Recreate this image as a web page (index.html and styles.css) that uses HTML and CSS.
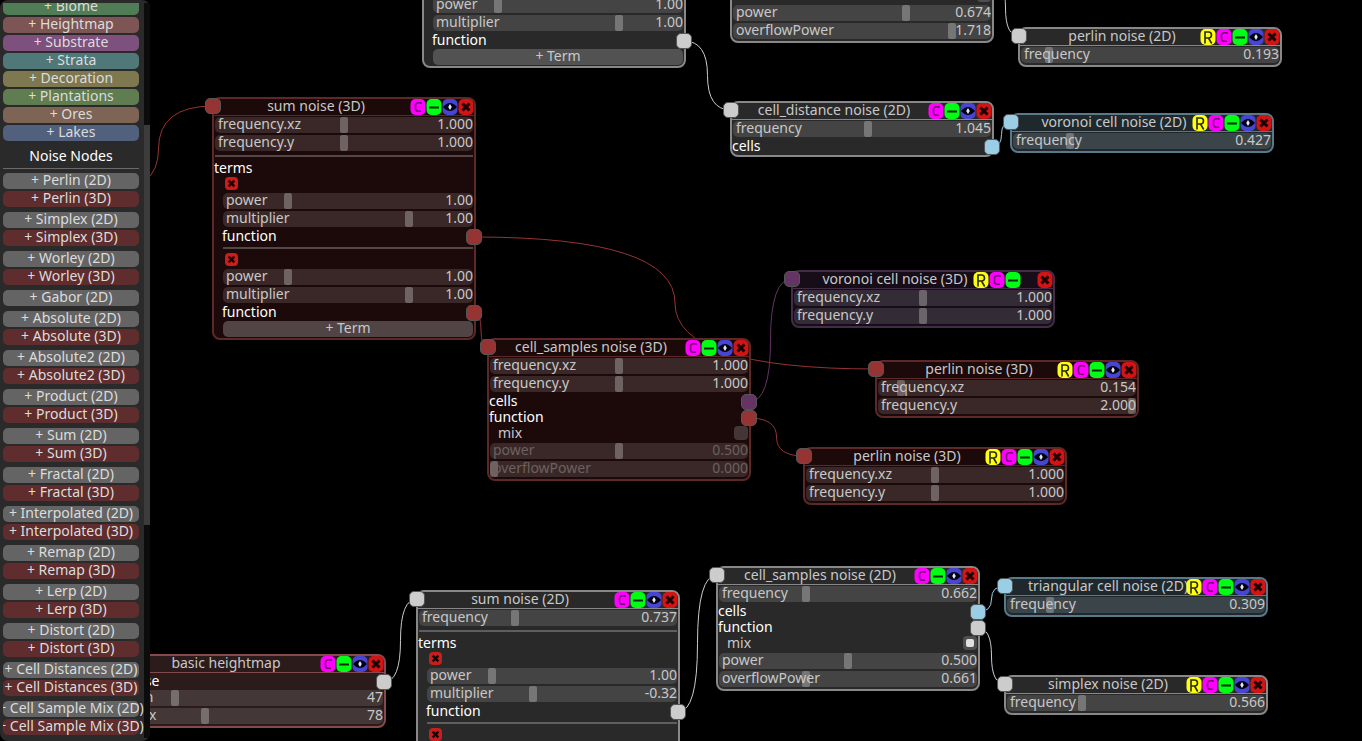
FILE: index.html
```html
<!DOCTYPE html>
<html lang="en">
<head>
  <meta charset="UTF-8" />
  <meta name="viewport" content="width=device-width, initial-scale=1.0" />
  <title>Node Editor</title>
  <link rel="stylesheet" href="styles.css">
</head>
<body>

  <main class="canvas" id="canvas">
    <svg class="links" id="links" aria-hidden="true"></svg>
  </main>

  <aside class="sidebar">
    <div class="palette" id="palette">
      <button class="add biome">+ Biome</button>
      <button class="add heightmap">+ Heightmap</button>
      <button class="add substrate">+ Substrate</button>
      <button class="add strata">+ Strata</button>
      <button class="add decoration">+ Decoration</button>
      <button class="add plantations">+ Plantations</button>
      <button class="add ores">+ Ores</button>
      <button class="add lakes">+ Lakes</button>
      <h2>Noise Nodes</h2>
    </div>
    <div class="scrollbar"><div class="thumb"></div></div>
  </aside>

  <script src="script.js"></script>
</body>
</html>
```
FILE: styles.css
```css
* {
  box-sizing: border-box;
}
body {
  margin: 0;
  height: 100vh;
  overflow: hidden;
  background: #000;
  color: #c8c8c8;
  font-family: "Noto Sans", sans-serif;
  font-size: 14px;
  line-height: 14px;
}
button {
  border: 0;
  padding: 0;
  font: inherit;
  color: inherit;
  cursor: pointer;
}

/* sidebar */
.sidebar {
  position: relative;
  z-index: 1;
  display: flex;
  width: 150px;
  height: 100vh;
  padding: 3px 0 3px 3px;
  background: #2a2a2a;
  border-radius: 8px;
  overflow: hidden;
}
.palette {
  display: flex;
  flex-direction: column;
  gap: 2px;
  flex: 1;
  padding: 0 5px 8px 0;
  overflow: hidden;
}
.add {
  display: flex;
  flex: none;
  justify-content: center;
  height: 16px;
  border-radius: 5px;
  background: #646464;
  color: #dcdcdc;
  white-space: nowrap;
}
.palette h2 {
  flex: none;
  margin: 5px 0 2px;
  padding-bottom: 4px;
  border-bottom: 1px solid #6a6a6a;
  color: #fff;
  font-size: 14px;
  font-weight: normal;
  line-height: 16px;
  text-align: center;
}
.group {
  display: flex;
  flex: none;
  flex-direction: column;
  gap: 2px;
  padding-bottom: 3px;
}
.biome { background: #507d55; }
.heightmap { background: #7d5555; }
.substrate { background: #7d507d; }
.strata { background: #507878; }
.decoration { background: #7d7850; }
.plantations { background: #5f7d50; }
.ores { background: #7d6455; }
.lakes { background: #50607d; }
.three-d { background: #5f2d2d; }

.scrollbar {
  width: 6px;
  padding-top: 122px;
  background: #0c0c0c;
}
.thumb {
  height: 400px;
  background: #3c3c3c;
}

/* canvas */
.canvas {
  position: absolute;
  inset: 0;
  z-index: 0;
  overflow: hidden;
}
.links {
  position: absolute;
  width: 100%;
  height: 100%;
  fill: none;
}

/* nodes */
.node {
  --line: #888;
  --bg: #292929;
  --track: #444;
  --term: #525252;
  position: absolute;
  width: 264px;
  padding-bottom: 1px;
  border: 2px solid var(--line);
  border-radius: 8px;
  background: var(--bg);
}
.node.red {
  --line: #5c2828;
  --bg: #1c0a0a;
  --track: #3a2828;
  --term: #504444;
}
.node.blue {
  --line: #58798a;
  --bg: #1e282d;
  --track: #3b4549;
}
.node.purple {
  --line: #442c48;
  --bg: #160d18;
  --track: #332b35;
}
.node.brown {
  --line: #84494c;
  --bg: #2c1b1b;
  --track: #443737;
}
.head {
  display: flex;
  height: 17px;
  border-bottom: 1px solid var(--line);
}
.title {
  flex: 1;
  margin: 0;
  padding-left: 8px;
  font-size: 14px;
  font-weight: normal;
  line-height: 14px;
  text-align: center;
  white-space: nowrap;
}
.tools {
  display: flex;
  flex: none;
  justify-content: flex-end;
  width: 64px;
}
.tool {
  flex: none;
  width: 16px;
  height: 16px;
  background: none;
}
.tool svg {
  display: block;
}
.row {
  display: flex;
  height: 16px;
  line-height: 16px;
  position: relative;
}
.label {
  color: #fff;
}
.slider {
  display: grid;
  grid-template-columns: 1fr auto;
  height: 18px;
  padding: 1px;
  position: relative;
}
.slider input {
  grid-area: 1 / 1 / 2 / 3;
  appearance: none;
  width: 100%;
  height: 16px;
  margin: 0;
  border-radius: 5px;
  background: var(--track);
}
.slider input::-webkit-slider-thumb {
  appearance: none;
  width: 8px;
  height: 16px;
  border-radius: 2px;
  background: rgba(255, 255, 255, 0.27);
}
.slider label,
.slider output {
  grid-row: 1;
  z-index: 1;
  pointer-events: none;
}
.slider label {
  grid-column: 1;
  padding-left: 3px;
}
.slider output {
  grid-column: 2;
}
.slider.off label,
.slider.off output {
  color: #6c6060;
}
.check {
  justify-content: space-between;
  height: 17px;
  padding: 0 1px 0 9px;
}
.check input {
  appearance: none;
  display: grid;
  place-items: center;
  width: 14px;
  height: 14px;
  margin: 1px 0;
  border-radius: 4px;
  background: rgba(255, 255, 255, 0.18);
}
.check input:checked::before {
  content: "";
  width: 8px;
  height: 8px;
  border-radius: 2px;
  background: #e0e0e0;
}
.rule {
  height: 8px;
  margin: 0 1px;
  padding: 3px 0;
  border: 0;
  background: rgba(255, 255, 255, 0.25) content-box;
}
.term {
  padding-left: 8px;
}
.remove {
  display: block;
  height: 16px;
  padding: 1px 0 2px 3px;
  background: none;
}
.remove svg {
  display: block;
}
.add-term {
  display: block;
  width: calc(100% - 10px);
  height: 16px;
  margin: 1px 1px 0 9px;
  padding-bottom: 2px;
  border-radius: 5px;
  background: var(--term);
}
.port {
  position: absolute;
  z-index: 2;
  width: 16px;
  height: 16px;
  border: 1px solid #555;
  border-radius: 5px;
  background: #ccc;
}
.port.in {
  left: -9px;
  top: -1px;
}
.port.out {
  right: -8px;
  top: 1px;
}
.port.red { background: #963434; }
.port.blue { background: #9acde6; }
.port.purple { background: #643464; }
```
FILE: script.js
```js
const noises = ['Perlin', 'Simplex', 'Worley', 'Gabor', 'Absolute', 'Absolute2', 'Product', 'Sum',
  'Fractal', 'Interpolated', 'Remap', 'Lerp', 'Distort', 'Cell Distances', 'Cell Sample Mix'];

const palette = document.getElementById('palette');
palette.innerHTML += noises.map(name => `
  <div class="group">
    <button class="add">+ ${name} (2D)</button>
    ${name === 'Gabor' ? '' : `<button class="add three-d">+ ${name} (3D)</button>`}
  </div>`).join('');
palette.scrollTop = 4;

const cross = '<path d="M4.5 4.5l7 7M11.5 4.5l-7 7" stroke="#1a0000" stroke-width="3"/>';
const icons = {
  R: ['random', '#ffff14', '<path d="M5 14.5V3h3.5a3 3 0 0 1 0 6H5M8.5 9l3.2 5.5" fill="none" stroke="#2a2a00" stroke-width="1.6"/>'],
  C: ['color', '#ff00ff', '<path d="M11 5V3.8H8Q5.5 3.8 5.5 6.5v3q0 2.8 2.5 2.8h3" fill="none" stroke="#780078" stroke-width="1.6"/>'],
  M: ['minimize', '#00ff14', '<path d="M3 8.5h10" stroke="#002800" stroke-width="2"/>'],
  E: ['preview', '#4646d2', '<path d="M1 8Q8 0 15 8Q8 16 1 8z" fill="#000014"/><path d="M8 5l1.8 3-1.8 3-1.8-3z" fill="#e4e4ee"/>'],
  X: ['remove', '#d21414', cross]
};

function tool(key) {
  if (key === ' ') return '<span class="tool"></span>';
  const [name, color, shape] = icons[key];
  return `<button class="tool" aria-label="${name}"><svg width="16" height="16" viewBox="0 0 16 16">
    <rect x=".5" width="15" height="16" rx="5" fill="${color}"/>${shape}</svg></button>`;
}

let count = 0;
function slider(name, value, min, max, off) {
  const id = 'field' + count++;
  return `<div class="slider${off ? ' off' : ''}">
    <input type="range" id="${id}" min="${min}" max="${max}" step="any" value="${value}"${off ? ' disabled' : ''}>
    <label for="${id}">${name}</label><output for="${id}">${value}</output></div>`;
}
const label = (name, color) =>
  `<div class="row"><span class="label">${name}</span><i class="port out ${color}"></i></div>`;
const freq = value => slider('frequency', value, 0, 2);
const freq3 = (xz, y) => slider('frequency.xz', xz, 0, 2) + slider('frequency.y', y, 0, 2);

function mix(on, power, overflow) {
  const id = 'field' + count++;
  return `<div class="row check"><label for="${id}">mix</label><input type="checkbox" id="${id}"${on ? ' checked' : ''}></div>`
    + slider('power', power, 0, 1, !on) + slider('overflowPower', overflow, 0, 2, !on);
}
function terms(list, color) {
  return '<hr class="rule"><div class="row"><span class="label">terms</span></div>' + list.map(multiplier => `<div class="term">
      <button class="remove" aria-label="remove term"><svg width="13" height="13" viewBox="0 0 16 16">
        <rect width="16" height="16" rx="5" fill="#c81e1e"/>${cross}</svg></button>
      ${slider('power', '1.00', 0, 4)}${slider('multiplier', multiplier, -2, 2)}${label('function', color)}
    </div>`).join('<div class="term"><hr class="rule"></div>') + '<button class="add-term">+ Term</button>';
}

// id, x, y, color, title, tools, body
const nodes = [
  ['sumTop', 422, -157, 'gray', 'sum noise (2D)', 'CMEX', freq('1.000') + terms(['1.00', '1.00'], 'gray')],
  ['samplesTop', 730, -82, 'gray', 'cell_samples noise (2D)', 'CMEX',
    freq('1.000') + label('cells', 'blue') + label('function', 'gray') + mix(true, '0.674', '1.718')],
  ['perlinTop', 1018, 27, 'gray', 'perlin noise (2D)', 'RCMEX', freq('0.193')],
  ['distance', 730, 101, 'gray', 'cell_distance noise (2D)', 'CMEX', freq('1.045') + label('cells', 'blue')],
  ['voronoi', 1010, 113, 'blue', 'voronoi cell noise (2D)', 'RCMEX', freq('0.427')],
  ['sum3', 212, 97, 'red', 'sum noise (3D)', 'CMEX', freq3('1.000', '1.000') + terms(['1.00', '1.00'], 'red')],
  ['voronoi3', 791, 270, 'purple', 'voronoi cell noise (3D)', 'RCM X', freq3('1.000', '1.000')],
  ['samples3', 487, 338, 'red', 'cell_samples noise (3D)', 'CMEX',
    freq3('1.000', '1.000') + label('cells', 'purple') + label('function', 'red') + mix(false, '0.500', '0.000')],
  ['perlinA', 875, 360, 'red', 'perlin noise (3D)', 'RCMEX', freq3('0.154', '2.000')],
  ['perlinB', 803, 447, 'red', 'perlin noise (3D)', 'RCMEX', freq3('1.000', '1.000')],
  ['height', 122, 654, 'brown', 'basic heightmap', 'CMEX',
    label('noise', 'gray') + slider('min', 47, 0, 255) + slider('max', 78, 0, 255)],
  ['sum2', 416, 590, 'gray', 'sum noise (2D)', 'CMEX', freq('0.737') + terms(['-0.32', '1.00'], 'gray')],
  ['samples2', 716, 566, 'gray', 'cell_samples noise (2D)', 'CMEX',
    freq('0.662') + label('cells', 'blue') + label('function', 'gray') + mix(true, '0.500', '0.661')],
  ['triangular', 1004, 577, 'blue', 'triangular cell noise (2D)', 'RCMEX', freq('0.309')],
  ['simplex', 1004, 675, 'gray', 'simplex noise (2D)', 'RCMEX', freq('0.566')]
];

const canvas = document.getElementById('canvas');
for (const [id, x, y, color, title, tools, body] of nodes) {
  const node = document.createElement('section');
  node.className = 'node ' + color;
  node.id = id;
  node.style.left = x + 'px';
  node.style.top = y + 'px';
  node.innerHTML = `${id === 'height' ? '' : `<i class="port in ${color}"></i>`}
    <header class="head"><h3 class="title">${title}</h3><div class="tools">${[...tools].map(tool).join('')}</div></header>${body}`;
  canvas.append(node);
}

// source node, index of its output, target node, stroke
const links = [
  ['sumTop', 1, 'distance', '#ccc'],
  ['samplesTop', 1, 'perlinTop', '#ccc'],
  ['distance', 0, 'voronoi', '#9acde6'],
  ['sum3', 0, 'perlinA', '#963434'],
  ['sum3', 1, 'samples3', '#963434'],
  ['samples3', 0, 'voronoi3', '#643464'],
  ['samples3', 1, 'perlinB', '#963434'],
  ['height', 0, 'sum2', '#ccc'],
  ['sum2', 0, 'samples2', '#ccc'],
  ['samples2', 0, 'triangular', '#9acde6'],
  ['samples2', 1, 'simplex', '#ccc']
];
const center = el => {
  const r = el.getBoundingClientRect();
  return [r.left + r.width / 2, r.top + r.height / 2];
};
// two bends that meet halfway
function curve([x1, y1], [x2, y2], color) {
  const mx = (x1 + x2) / 2;
  const my = (y1 + y2) / 2;
  return `<path d="M${x1} ${y1}Q${mx} ${y1} ${mx} ${my}Q${mx} ${y2} ${x2} ${y2}" stroke="${color}"/>`;
}
const input = id => center(document.querySelector(`#${id} > .port.in`));
document.getElementById('links').innerHTML = curve([104, 192], input('sum3'), '#963434')
  + links.map(([from, out, to, color]) =>
    curve(center(document.querySelectorAll(`#${from} .port.out`)[out]), input(to), color)).join('');
```
